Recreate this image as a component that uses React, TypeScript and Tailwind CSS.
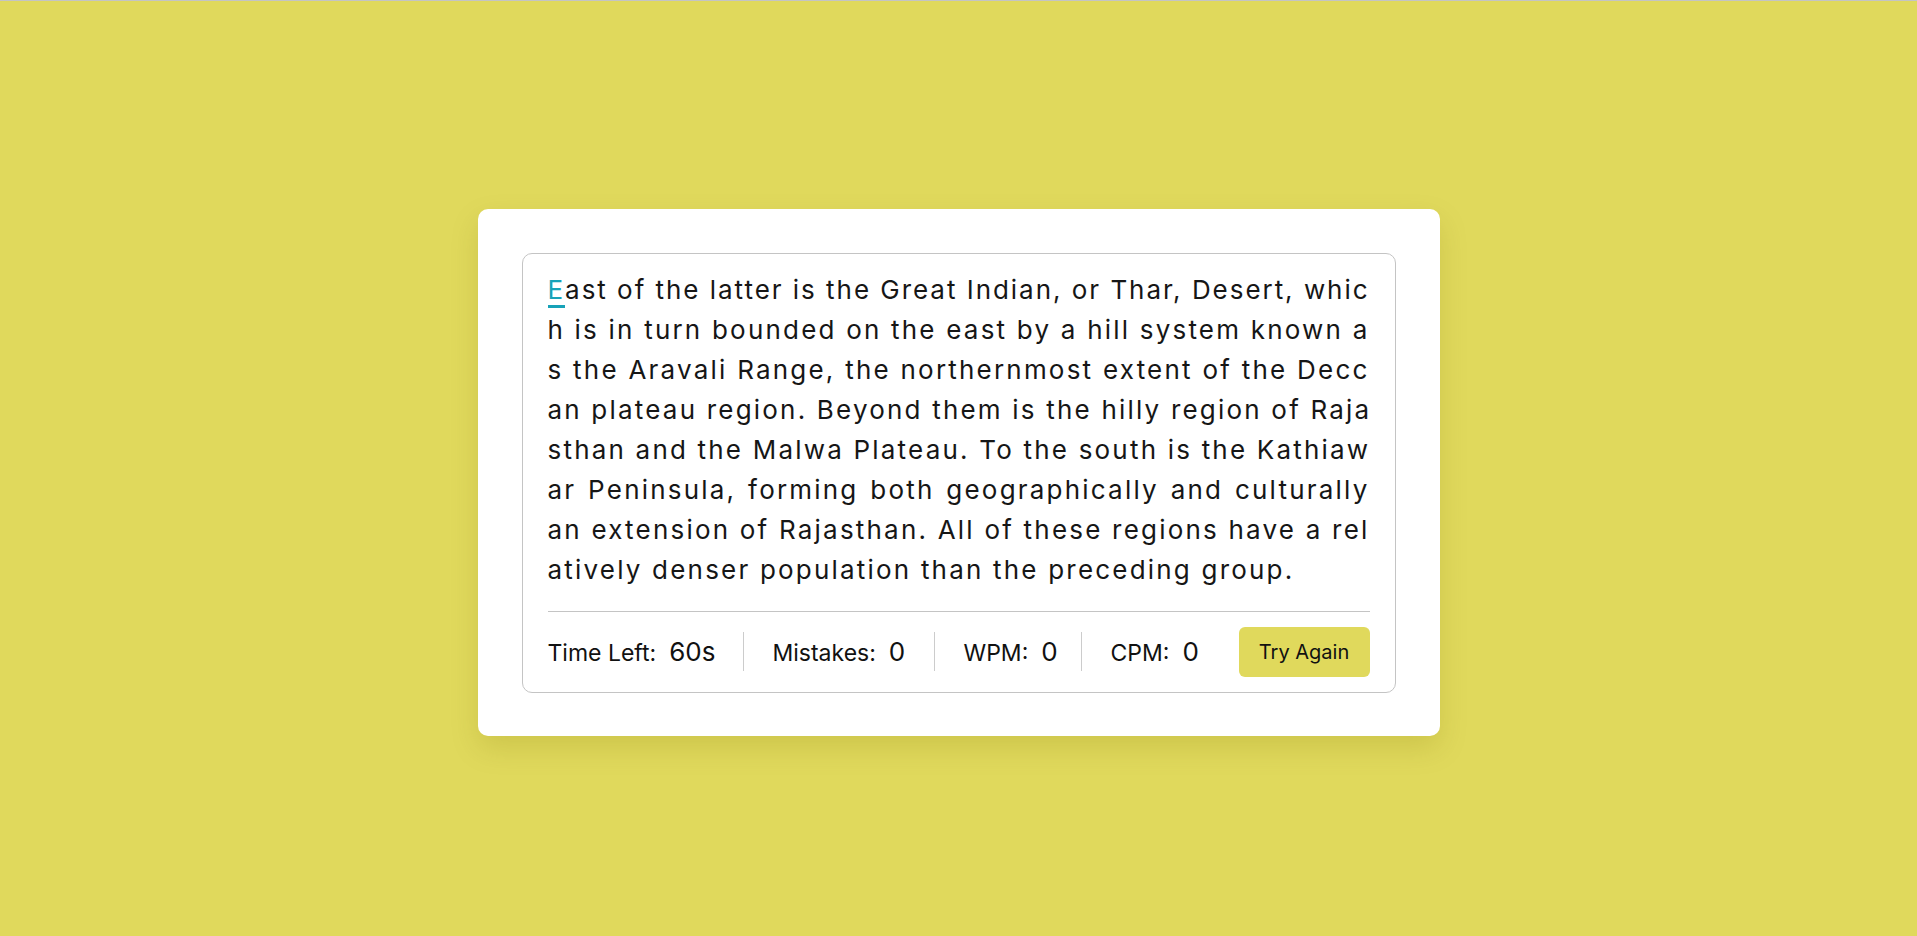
import React from "react";

const LINES = [
  "ast of the latter is the Great Indian, or Thar, Desert, whic",
  "h is in turn bounded on the east by a hill system known a",
  "s the Aravali Range, the northernmost extent of the Decc",
  "an plateau region. Beyond them is the hilly region of Raja",
  "sthan and the Malwa Plateau. To the south is the Kathiaw",
  "ar Peninsula, forming both geographically and culturally",
  "an extension of Rajasthan. All of these regions have a rel",
  "atively denser population than the preceding group.",
];

function Stat({
  label,
  value,
  className,
}: {
  label: string;
  value: string;
  className: string;
}) {
  return (
    <li className={"flex items-baseline " + className}>
      <span className="text-[23px] text-[#111111]">{label}</span>
      <span className="ml-[13px] text-[26px] text-[#111111]">{value}</span>
    </li>
  );
}

export default function App() {
  return (
    <div
      className="min-h-screen w-full bg-[#e0d95c] border-t border-[#c4c4c4] pt-[7px] flex items-center justify-center"
      style={{ fontFamily: "Inter, 'Open Sans', sans-serif" }}
    >
      <div className="w-[962px] bg-white rounded-[10px] p-[44px] pb-[43px] shadow-[0_12px_28px_rgba(120,110,0,0.18)]">
        <div className="border border-[#c4c4c4] rounded-[10px] px-[25px] pt-[16px] pb-[15px]">
          <div className="text-[26px] leading-[40px] text-[#161616] mb-[21px]">
            {LINES.map((l, i) => (
              <div
                key={i}
                className={
                  i === 0
                    ? "whitespace-nowrap tracking-[1.95px] text-justify [text-align-last:justify]"
                    : i < LINES.length - 1
                    ? "whitespace-nowrap tracking-[2.2px] text-justify [text-align-last:justify]"
                    : "whitespace-nowrap tracking-[2.2px]"
                }
              >
                {i === 0 && (
                  <span className="text-[#17a2b8] border-b-[3px] border-[#17a2b8]">E</span>
                )}
                {l}
              </div>
            ))}
          </div>
          <div className="border-t border-[#c4c4c4] pt-[15px] flex items-center">
            <ul className="flex items-center">
              <Stat className="w-[195px]" label="Time Left:" value="60s" />
              <Stat className="w-[191px] pl-[29px] border-l border-[#cccccc]" label="Mistakes:" value="0" />
              <Stat className="w-[147px] pl-[29px] border-l border-[#cccccc]" label="WPM:" value="0" />
              <Stat className="pl-[29px] border-l border-[#cccccc]" label="CPM:" value="0" />
            </ul>
            <button className="ml-auto h-[50px] w-[131px] rounded-[6px] bg-[#e0d95c] text-[20px] text-[#111111]">
              Try Again
            </button>
          </div>
        </div>
      </div>
    </div>
  );
}
